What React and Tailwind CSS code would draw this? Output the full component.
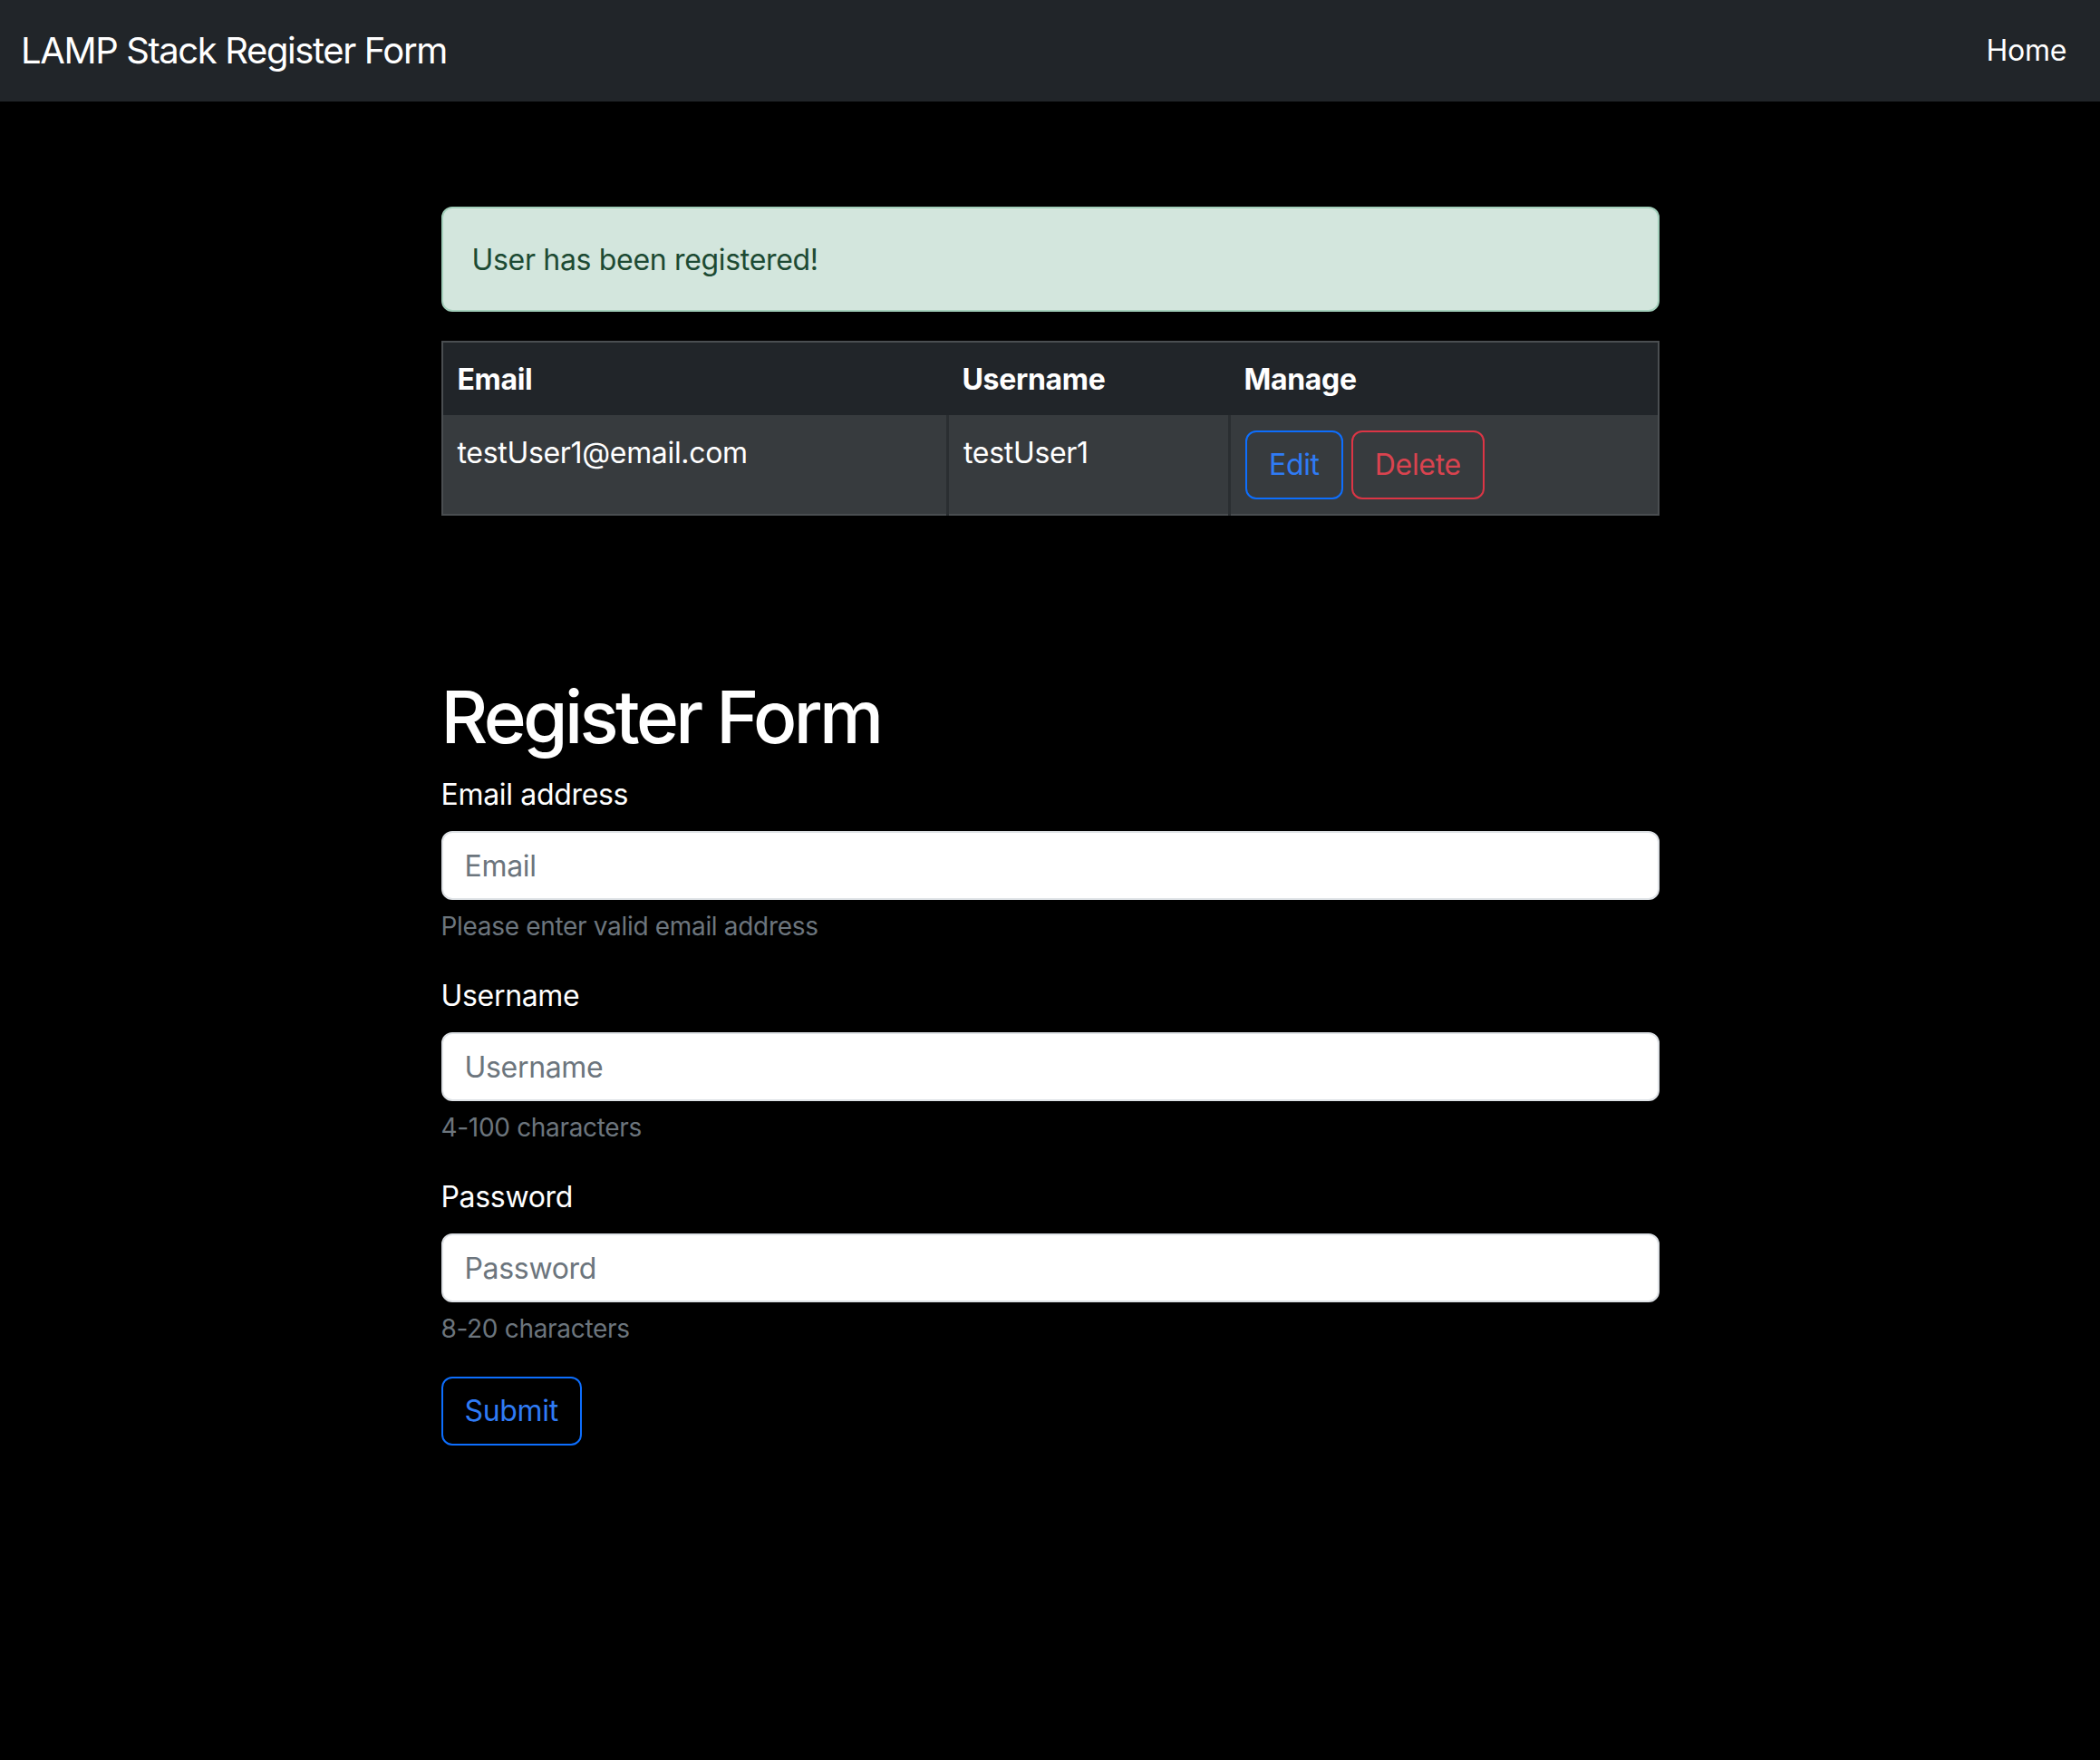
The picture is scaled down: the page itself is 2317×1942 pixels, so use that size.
import React from 'react';

const users = [{ email: 'testUser1@email.com', username: 'testUser1' }];

const Field = ({ label, type, placeholder, help }) => (
  <div className="mb-[32px]">
    <label className="block mb-[16px] text-[32px] leading-[48px] text-white">{label}</label>
    <input
      type={type}
      placeholder={placeholder}
      className="block w-full h-[76px] px-[24px] rounded-[12px] border-2 border-[#dee2e6] bg-white text-[32px] text-[#212529] placeholder:text-[#6c757d] outline-none"
    />
    <div className="mt-[8px] text-[28px] leading-[42px] text-[#6c757d]">{help}</div>
  </div>
);

const App = () => {
  return (
    <div className="min-h-[1942px] bg-black font-['Inter',sans-serif] tracking-[-0.02em]">
      <nav className="h-[112px] bg-[#212529] flex items-center justify-between pl-[23px] pr-[37px]">
        <span className="text-[40px] leading-[60px] text-white tracking-[-0.035em]">LAMP Stack Register Form</span>
        <a href="#" className="text-[32px] leading-[48px] text-white">Home</a>
      </nav>

      <main className="w-[1344px] mx-auto pt-[116px]">
        <div className="rounded-[12px] border-2 border-[#a3cfbb] bg-[#d3e6dd] px-[32px] pt-[33px] pb-[31px] text-[32px] leading-[48px] text-[#1d4a33] mb-[32px]">
          User has been registered!
        </div>

        <table className="w-full border-collapse border-2 border-[#4a4e51] text-[32px] leading-[48px] text-white">
          <thead className="bg-[#212529]">
            <tr>
              <th className="w-[558px] text-left font-bold px-[16px] pt-[17px] pb-[15px]">Email</th>
              <th className="w-[311px] text-left font-bold px-[16px] pt-[17px] pb-[15px]">Username</th>
              <th className="text-left font-bold px-[16px] pt-[17px] pb-[15px]">Manage</th>
            </tr>
          </thead>
          <tbody className="bg-[#373b3e]">
            {users.map((u) => (
              <tr key={u.email}>
                <td className="align-top px-[16px] pt-[18px] pb-[14px] border-r-[3px] border-[#2a2e31]">{u.email}</td>
                <td className="align-top px-[16px] pt-[18px] pb-[14px] border-r-[3px] border-[#2a2e31]">{u.username}</td>
                <td className="align-top px-[16px] pt-[17px] pb-[16px]">
                  <div className="flex gap-[9px]">
                    <button className="h-[76px] px-[24px] rounded-[12px] border-2 border-[#0d6efd] text-[#2f7bf5]">Edit</button>
                    <button className="h-[76px] px-[24px] rounded-[12px] border-2 border-[#dc3545] text-[#d9434f]">Delete</button>
                  </div>
                </td>
              </tr>
            ))}
          </tbody>
        </table>

        <form className="mt-[174px]">
          <h1 className="text-[80px] leading-[96px] font-medium text-white mb-[14px] tracking-[-0.045em]">Register Form</h1>
          <Field label="Email address" type="email" placeholder="Email" help="Please enter valid email address" />
          <Field label="Username" type="text" placeholder="Username" help="4-100 characters" />
          <Field label="Password" type="password" placeholder="Password" help="8-20 characters" />
          <button type="submit" className="h-[76px] px-[24px] rounded-[12px] border-2 border-[#0d6efd] text-[32px] text-[#2f7bf5]">
            Submit
          </button>
        </form>
      </main>
    </div>
  );
};

export default App;
